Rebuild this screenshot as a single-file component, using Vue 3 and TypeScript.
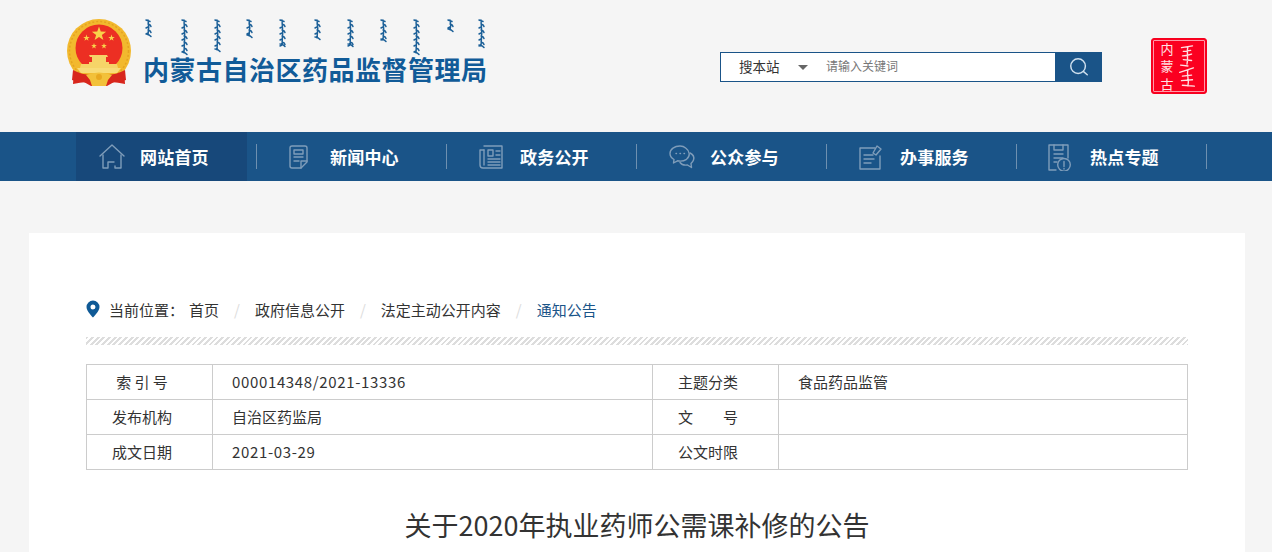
<template>
  <div class="page">
    <header class="top">
      <div class="logo">
        <svg class="emblem" viewBox="0 0 66 68" width="66" height="68">
          <!-- ленты -->
          <path d="M8 50 L7 65 L18 63 L25 67 L41 67 L48 63 L59 65 L58 50 Z" fill="#d8261c" />
          <circle cx="33" cy="32" r="32" fill="#f2b92e" />
          <circle cx="33" cy="32" r="29.500" fill="none" stroke="#e5a321" stroke-width="1.500" stroke-dasharray="2 2" />
          <circle cx="33" cy="29" r="23.500" fill="#ec2f23" />
          <polygon v-for="(s, i) in stars" :key="i" :points="s" fill="#f8d24a" />
          <path d="M23 36 h18 l1 2 h-2 v5 h3 v2 h8 l1 4 h-38 l1-4 h8 v-2 h3 v-5 h-2z" fill="#f6d468" />
          <path d="M11 49 h44 l-4 5 h-36z" fill="#f8dc78" />
          <path d="M7 51 Q20 58 33 55 Q46 58 59 51 L60 61 Q46 66 33 61 Q20 66 6 61 Z" fill="#d8261c" />
          <path d="M20 56 Q33 51 46 56 L42 61 L40 67 H26 L24 61 Z" fill="#f2c13a" />
          <circle cx="33" cy="58" r="3" fill="#e8a820" />
        </svg>
        <div class="logo-text">
          <svg class="script" viewBox="0 0 350 38" width="350" height="38" fill="none" stroke="#1c6098" stroke-width="1.500" stroke-linecap="round">
            <path v-for="(d, i) in scriptPaths" :key="i" :d="d" />
          </svg>
          <div class="site-name">内蒙古自治区药品监督管理局</div>
        </div>
      </div>
      <div class="search">
        <div class="scope"><span>搜本站</span><i class="caret"></i></div>
        <div class="hint">请输入关键词</div>
        <div class="go">
          <svg viewBox="0 0 24 24" width="22" height="22" fill="none" stroke="#cfe0ee" stroke-width="1.600">
            <circle cx="11" cy="11" r="8" />
            <path d="M17 17l4 3.500" stroke-linecap="round" />
          </svg>
        </div>
      </div>
      <div class="seal">
        <div class="seal-cn">内<br />蒙<br />古</div>
        <svg viewBox="0 0 24 48" width="22" height="46" fill="none" stroke="#ffdfe3" stroke-width="1.500" stroke-linecap="round">
          <path d="M6 4l12-2M13 3c-2 6 1 12-1 19M8 8l8-1M7 13c4 0 7-1 10-2M8 17l9 1M5 23l8 1" />
          <path d="M4 31l15-5M13 28c-2 6 2 11 0 18M7 35l10-1M6 40l12-1M7 45l13 1" />
        </svg>
      </div>
    </header>

    <nav class="nav">
      <div class="nav-inner">
        <template v-for="(n, i) in navItems" :key="n.label">
          <a class="nav-item" :class="{ on: i === 0 }">
            <svg class="nav-ico" viewBox="0 0 28 28" width="28" height="28" fill="none" stroke="#7f9dba" stroke-width="1.400" stroke-linejoin="round" stroke-linecap="round">
              <path v-for="(d, j) in n.icon" :key="j" :d="d" />
            </svg>
            <span>{{ n.label }}</span>
          </a>
          <i class="sep"></i>
        </template>
      </div>
    </nav>

    <main class="card">
      <div class="crumbs">
        <svg viewBox="0 0 14 18" width="14" height="18">
          <path d="M7 0.500a6.500 6.500 0 0 0-6.500 6.500c0 4.200 6.500 10.500 6.500 10.500s6.500-6.300 6.500-10.500a6.500 6.500 0 0 0-6.500-6.500zm0 9a2.500 2.500 0 1 1 0-5 2.500 2.500 0 0 1 0 5z" fill="#0f5a96" />
        </svg>
        <span class="here">当前位置：</span>
        <template v-for="(c, i) in crumbs" :key="c">
          <span v-if="i > 0" class="slash">/</span>
          <a :class="{ last: i === crumbs.length - 1 }">{{ c }}</a>
        </template>
      </div>
      <div class="stripe"></div>
      <table class="meta">
        <colgroup>
          <col class="c1" />
          <col class="c2" />
          <col class="c3" />
          <col />
        </colgroup>
        <tbody>
          <tr>
            <th>索 引 号</th>
            <td class="num">000014348/2021-13336</td>
            <th>主题分类</th>
            <td>食品药品监管</td>
          </tr>
          <tr>
            <th>发布机构</th>
            <td>自治区药监局</td>
            <th><span class="wide"><span>文</span><span>号</span></span></th>
            <td></td>
          </tr>
          <tr>
            <th>成文日期</th>
            <td class="num">2021-03-29</td>
            <th>公文时限</th>
            <td></td>
          </tr>
        </tbody>
      </table>
      <h1 class="title">关于2020年执业药师公需课补修的公告</h1>
    </main>
  </div>
</template>

<script setup lang="ts">
// пятиконечная звезда для герба
function star(cx: number, cy: number, r: number): string {
  const pts: string[] = []
  for (let i = 0; i < 10; i++) {
    const a = -Math.PI / 2 + (i * Math.PI) / 5
    const k = i % 2 ? r * 0.4 : r
    pts.push(`${(cx + k * Math.cos(a)).toFixed(2)},${(cy + k * Math.sin(a)).toFixed(2)}`)
  }
  return pts.join(' ')
}

const stars = [star(33, 15, 7.5), star(20.5, 19, 3.4), star(45.5, 19, 3.4), star(28, 27, 3), star(38, 27, 3)]

// каллиграфия в логотипе: x колонки и длина штриха
const scriptCols: [number, number][] = [
  [5, 16], [41, 34], [74, 31], [106, 17], [139, 26], [174, 19],
  [207, 26], [240, 21], [273, 34], [307, 11], [338, 27],
]

const scriptPaths = scriptCols.map(([x, h]) => {
  let d = `M${x - 2} 1l4 1.500M${x} 1Q${x + 1.5} ${h / 2} ${x} ${h}`
  for (let y = 5; y < h - 2; y += 6) {
    d += ` M${x} ${y}q2.500 .5 3 2.500 M${x} ${y + 3}l-2 1`
  }
  d += ` M${x - 2} ${h - 1}q3 0 5 2.500`
  return d
})

const navItems = [
  {
    label: '网站首页',
    icon: ['M2 13L14 2 26 13', 'M5 12v13h5v-6h6', 'M23 12v13h-6v-2'],
  },
  {
    label: '新闻中心',
    icon: ['M4 3h13a2 2 0 0 1 2 2v14l-6 6H4a2 2 0 0 1-2-2V5a2 2 0 0 1 2-2z', 'M6 7h9v4H6z', 'M6 14h9M6 18h5', 'M19 18h-6v7'],
  },
  {
    label: '政务公开',
    icon: ['M6 3h18v22H5a3 3 0 0 1-3-3V7h4', 'M6 7v15', 'M10 7h5v6h-5z', 'M18 8h4M18 12h4M10 16h12M10 19h12M10 22h12'],
  },
  {
    label: '公众参与',
    icon: ['M12 3c-5.500 0-10 3.300-10 7.500 0 2.500 1.500 4.500 4 6l-.5 3.500 4-2.200c3 .6 6.500.2 9-1.500 4-3 3.500-8-.5-11C16.500 4 14 3 12 3z', 'M22 10c3 1.500 4.500 4 3.500 7-.5 1.500-1.500 2.500-2.500 3.500l.5 4-4-2.500c-3 .5-6-.5-7.500-2.500', 'M8 10.500h.5M12 10.500h.5M16 10.500h.5'],
  },
  {
    label: '办事服务',
    icon: ['M17 5H2v21h20V13', 'M6 12h9M6 16h10M6 20h7', 'M15 10l4-7 4 3-5 6z'],
  },
  {
    label: '热点专题',
    icon: ['M1 2h19v13M8 27H1V2', 'M6 2v5h9V2', 'M6 11h9M6 15h9M6 19h3', 'M16 15.500a6.300 6.300 0 1 0 0 12.600 6.300 6.300 0 0 0 0-12.600z', 'M16 18.500v5M16 25.500v.5'],
  },
]

const crumbs = ['首页', '政府信息公开', '法定主动公开内容', '通知公告']
</script>

<style>
html,
body {
  margin: 0;
  background: #f5f5f5;
  overflow: hidden;
}
</style>

<style scoped>
.page {
  height: 552px;
  overflow: hidden;
  background: #f5f5f5;
  color: #333;
  font-family: "Noto Sans CJK SC", "Liberation Sans", sans-serif;
}

/* шапка */
.top {
  height: 132px;
  display: flex;
  align-items: flex-start;
  padding-left: 66px;
  box-sizing: border-box;
}
.logo {
  width: 654px;
  display: flex;
  gap: 11px;
  padding-top: 19px;
}
.emblem {
  flex: none;
}
.logo-text {
  display: flex;
  flex-direction: column;
}
.script {
  display: block;
}
.site-name {
  font-size: 26px;
  line-height: 28px;
  letter-spacing: 0.5px;
  font-weight: 700;
  color: #115b98;
  margin-top: -2px;
  white-space: nowrap;
}

.search {
  margin-top: 52px;
  width: 382px;
  height: 30px;
  display: flex;
  box-sizing: border-box;
  border: 1px solid #1a5488;
  background: #fff;
}
.scope {
  width: 105px;
  padding: 0 0 3px 18px;
  box-sizing: border-box;
  display: flex;
  align-items: center;
  gap: 18px;
  font-size: 13.500px;
  color: #333;
}
.caret {
  width: 0;
  height: 0;
  margin-top: 3px;
  border: 5px solid transparent;
  border-top: 5px solid #666;
  border-bottom: 0;
}
.hint {
  flex: 1;
  font-size: 12px;
  line-height: 26px;
  color: #777;
}
.go {
  width: 47px;
  margin: -1px -1px -1px 0;
  background: #1a5488;
  display: flex;
  align-items: center;
  justify-content: center;
}

.seal {
  margin: 38px 0 0 49px;
  width: 56px;
  height: 56px;
  box-sizing: border-box;
  border: 1px solid #f5001e;
  outline: 1px solid #ff9aa8;
  outline-offset: -3px;
  border-radius: 3px;
  background: #fb0020;
  display: flex;
  align-items: center;
  justify-content: center;
  gap: 2px;
  color: #ffe3e6;
}
.seal-cn {
  font-size: 13px;
  line-height: 17.500px;
}

/* меню */
.nav {
  height: 49px;
  background: #1a5488;
  padding-left: 76px;
}
.nav-inner {
  display: flex;
  align-items: center;
  height: 100%;
}
.nav-item {
  width: 171px;
  height: 49px;
  box-sizing: border-box;
  padding-left: 22px;
  display: flex;
  align-items: center;
  gap: 14px;
  color: #fff;
  font-size: 17px;
  letter-spacing: 0.2px;
  font-weight: 700;
}
.nav-item.on {
  background: #17487a;
}
.nav-ico {
  flex: none;
}
.sep {
  width: 1px;
  height: 25px;
  margin: 0 9px;
  background: #6e90b0;
}

/* карточка */
.card {
  margin: 52px 27px 0 29px;
  padding: 63px 57px 0;
  background: #fff;
  min-height: 300px;
}
.crumbs {
  display: flex;
  align-items: center;
  height: 26px;
  margin-bottom: 1px;
  font-size: 15px;
  white-space: nowrap;
}
.here {
  margin-left: 9px;
  margin-right: 5px;
}
.slash {
  margin: 0 15px;
  color: #ddd;
}
.last {
  color: #1a5488;
}
.stripe {
  height: 8px;
  margin-top: 15px;
  background: repeating-linear-gradient(135deg, #ddd 0 2px, #fff 2px 4px);
}
.meta {
  width: 100%;
  margin-top: 19px;
  border-collapse: collapse;
  table-layout: fixed;
  font-size: 15px;
}
.c1 {
  width: 126px;
}
.c2 {
  width: 440px;
}
.c3 {
  width: 126px;
}
.meta th,
.meta td {
  height: 35px;
  padding: 0 0 2px;
  box-sizing: border-box;
  border: 1px solid #ccc;
  font-weight: 400;
  color: #333;
}
.meta th {
  text-align: center;
  padding-right: 15px;
}
.meta td {
  padding-left: 19px;
}
.meta td.num {
  letter-spacing: 0.65px;
}
.wide {
  display: inline-flex;
  justify-content: space-between;
  width: 60px;
}
.title {
  margin: 37px 0 0;
  text-align: center;
  font-size: 27px;
  line-height: 36px;
  font-weight: 400;
  color: #333;
}
</style>
